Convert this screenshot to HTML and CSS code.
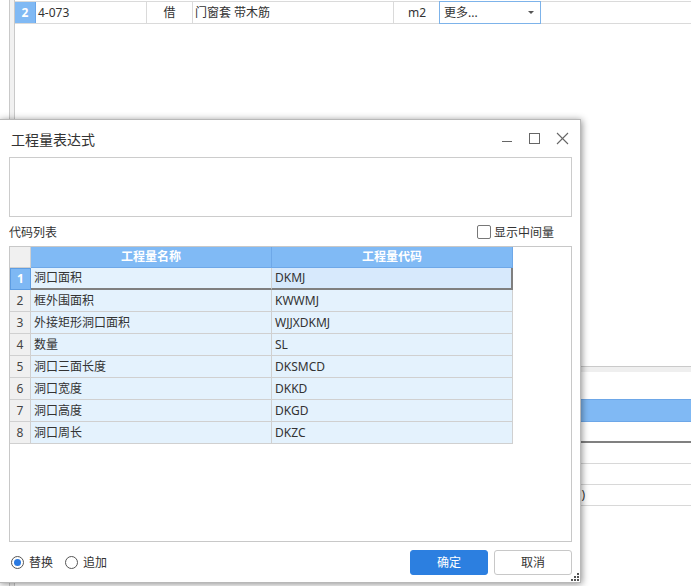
FILE: index.html
```html
<!DOCTYPE html>
<html lang="zh">
<head>
<meta charset="utf-8">
<title>工程量表达式</title>
<link rel="stylesheet" href="styles.css">
</head>
<body>
<div class="app">
  <div class="gutter"></div>
  <div class="main">
    <div class="toprow">
      <div class="rn">2</div>
      <div class="cell c1">4-073</div>
      <div class="cell c2">借</div>
      <div class="cell c3">门窗套 带木筋</div>
      <div class="cell c4">m2</div>
      <div class="dd"><span>更多...</span><span class="arrow"></span></div>
      <div class="rest"></div>
    </div>
    <div class="spacer"></div>
    <div class="lower">
      <div class="l-strip"></div>
      <div class="l-gap"></div>
      <div class="l-blue"></div>
      <div class="l-gap2"></div>
      <div class="l-row l-first"></div>
      <div class="l-row"></div>
      <div class="l-row"><span class="l-text">(洞口)</span></div>
    </div>
  </div>
</div>

<div class="dlg">
  <div class="titlebar">
    <span class="title">工程量表达式</span>
    <svg class="winctl" width="80" height="37" viewBox="0 0 80 37">
      <line x1="2" y1="21.5" x2="12" y2="21.5" stroke="#666" stroke-width="1"/>
      <rect x="29.5" y="13.5" width="10" height="10" fill="none" stroke="#666" stroke-width="1"/>
      <line x1="57" y1="13" x2="68" y2="24" stroke="#666" stroke-width="1.1"/>
      <line x1="68" y1="13" x2="57" y2="24" stroke="#666" stroke-width="1.1"/>
    </svg>
  </div>
  <div class="expr"></div>
  <div class="listhead">
    <span>代码列表</span>
    <label class="chk"><span class="box"></span><span>显示中间量</span></label>
  </div>
  <div class="tablebox">
    <div class="grid">
      <div class="corner"></div>
      <div class="hd">工程量名称</div>
      <div class="hd last">工程量代码</div>

      <div class="num sel">1</div>
      <div class="td selrow">洞口面积</div>
      <div class="td selrow selcode">DKMJ</div>

      <div class="num">2</div><div class="td">框外围面积</div><div class="td last">KWWMJ</div>
      <div class="num">3</div><div class="td">外接矩形洞口面积</div><div class="td last">WJJXDKMJ</div>
      <div class="num">4</div><div class="td">数量</div><div class="td last">SL</div>
      <div class="num">5</div><div class="td">洞口三面长度</div><div class="td last">DKSMCD</div>
      <div class="num">6</div><div class="td">洞口宽度</div><div class="td last">DKKD</div>
      <div class="num">7</div><div class="td">洞口高度</div><div class="td last">DKGD</div>
      <div class="num">8</div><div class="td">洞口周长</div><div class="td last">DKZC</div>
    </div>
  </div>
  <div class="bottom">
    <label class="radio"><span class="dot on"></span><span>替换</span></label>
    <label class="radio second"><span class="dot"></span><span>追加</span></label>
    <button class="btn primary">确定</button>
    <button class="btn">取消</button>
  </div>
  <svg class="grip" width="8" height="8" viewBox="0 0 8 8">
    <rect x="6" y="0" width="2" height="2" fill="#555"/>
    <rect x="3" y="3" width="2" height="2" fill="#555"/>
    <rect x="6" y="3" width="2" height="2" fill="#555"/>
    <rect x="0" y="6" width="2" height="2" fill="#555"/>
    <rect x="3" y="6" width="2" height="2" fill="#555"/>
    <rect x="6" y="6" width="2" height="2" fill="#555"/>
  </svg>
</div>
</body>
</html>
```

FILE: styles.css
```css
* { box-sizing: border-box; }
html, body { margin: 0; padding: 0; }
body {
  width: 691px;
  height: 586px;
  overflow: hidden;
  position: relative;
  background: #fff;
  font-family: "Noto Sans", "Noto Sans CJK SC", sans-serif;
  font-size: 12px;
  color: #333;
}

/* background grid */
.app { display: flex; height: 586px; }
.gutter {
  margin-left: 9px;
  width: 6px;
  border-left: 1px solid #c9c9c9;
  border-right: 1px solid #c9c9c9;
  background: #f1f1f1;
}
.main { flex: 1; display: flex; flex-direction: column; }
.toprow {
  margin-top: 1px;
  height: 23px;
  border-top: 1px solid #dadada;
  border-bottom: 1px solid #dadada;
  display: flex;
  align-items: stretch;
}
.toprow .rn {
  width: 21px;
  background: #80b9f4;
  border-right: 1px solid #6aa6e8;
  color: #fff;
  font-weight: bold;
  text-align: center;
  line-height: 21px;
}
.toprow .cell { border-right: 1px solid #dadada; line-height: 21px; white-space: nowrap; }
.toprow .c1 { width: 111px; padding-left: 2px; }
.toprow .c2 { width: 46px; text-align: center; }
.toprow .c3 { width: 201px; padding-left: 2px; }
.toprow .c4 { width: 45px; text-align: right; padding-right: 13px; border-right: none; }
.toprow .dd {
  width: 102px;
  height: 23px;
  margin: -1px 0;
  border: 1px solid #7db3ea;
  display: flex;
  align-items: center;
  justify-content: space-between;
  padding: 0 6px 0 4px;
  line-height: 21px;
}
.arrow {
  width: 0; height: 0;
  border-left: 3px solid transparent;
  border-right: 3px solid transparent;
  border-top: 3px solid #555;
}
.rest { flex: 1; }
.spacer { height: 342px; }
.lower { display: flex; flex-direction: column; }
.l-strip { height: 6px; border-top: 1px solid #cacaca; background: #efefef; }
.l-gap { height: 27px; }
.l-blue { height: 23px; background: #80b9f4; border-top: 1px solid #6da7e8; border-bottom: 1px solid #6da7e8; }
.l-gap2 { height: 19px; }
.l-row { height: 21px; border-bottom: 1px solid #d8d8d8; line-height: 20px; }
.l-first { height: 23px; border-top: 2px solid #808080; }
.l-text { display: block; width: 570px; text-align: right; }

/* dialog */
.dlg {
  position: absolute;
  left: -1px;
  top: 119px;
  width: 582px;
  height: 464px;
  background: #fff;
  border: 1px solid #b8b8b8;
  box-shadow: 1px 1px 7px rgba(0, 0, 0, 0.45);
  display: flex;
  flex-direction: column;
}
.titlebar {
  height: 37px;
  display: flex;
  align-items: center;
  padding-left: 11px;
}
.title { font-size: 14px; color: #333; }
.winctl { margin-left: auto; margin-right: 0; display: block; }
.expr {
  margin-left: 9px;
  width: 563px;
  height: 60px;
  border: 1px solid #cccccc;
}
.listhead {
  height: 29px;
  display: flex;
  align-items: center;
  justify-content: space-between;
  padding: 0 26px 0 9px;
}
.chk { display: flex; align-items: center; gap: 3px; }
.chk .box {
  width: 14px; height: 14px;
  border: 1px solid #777;
  border-radius: 2px;
  background: #fff;
}
.tablebox {
  margin-left: 9px;
  width: 563px;
  height: 296px;
  border: 1px solid #c8c8c8;
}
.grid {
  display: grid;
  grid-template-columns: 21px 241px 241px;
  grid-auto-rows: 22px;
  grid-template-rows: 21px;
}
.corner { background: #f0f0f0; border-right: 1px solid #d0d0d0; border-bottom: 1px solid #d0d0d0; }
.hd {
  background: #80baf5;
  color: #fff;
  font-weight: bold;
  text-align: center;
  line-height: 20px;
  border-right: 1px solid #6ea8e8;
  border-bottom: 1px solid #6ea8e8;
}
.num {
  background: #f0f0f0;
  border-right: 1px solid #d0d0d0;
  border-bottom: 1px solid #d0d0d0;
  text-align: center;
  line-height: 21px;
  color: #444;
}
.num.sel {
  background: #7eb8f4;
  color: #fff;
  font-weight: bold;
  border: 1px solid #5d9de3;
  line-height: 20px;
}
.td {
  background: #e4f2fd;
  border-right: 1px solid #d0d0d0;
  border-bottom: 1px solid #d0d0d0;
  padding-left: 3px;
  line-height: 21px;
  white-space: nowrap;
}
.td.selrow { border-bottom: 2px solid #7f7f7f; line-height: 20px; }
.td.selcode { background: #d7e9fc; border-right: 2px solid #7f7f7f; }

.bottom {
  height: 40px;
  display: flex;
  align-items: center;
  padding: 0 8px 0 11px;
}
.radio { display: flex; align-items: center; gap: 5px; }
.radio.second { margin-left: 12px; }
.dot {
  width: 13px; height: 13px;
  border: 1px solid #555;
  border-radius: 50%;
  background: #fff;
  display: flex;
  align-items: center;
  justify-content: center;
}
.dot.on::after {
  content: "";
  width: 7px; height: 7px;
  border-radius: 50%;
  background: #2a7ae2;
}
.btn {
  font-family: inherit;
  font-size: 12px;
  width: 78px;
  height: 25px;
  border-radius: 3px;
  border: 1px solid #c8c8c8;
  background: #fff;
  color: #333;
  padding: 0;
}
.btn.primary {
  margin-left: auto;
  margin-right: 6px;
  background: #2c7fe0;
  border-color: #2c7fe0;
  color: #fff;
}
.grip { position: absolute; right: 1px; bottom: 1px; }
```
